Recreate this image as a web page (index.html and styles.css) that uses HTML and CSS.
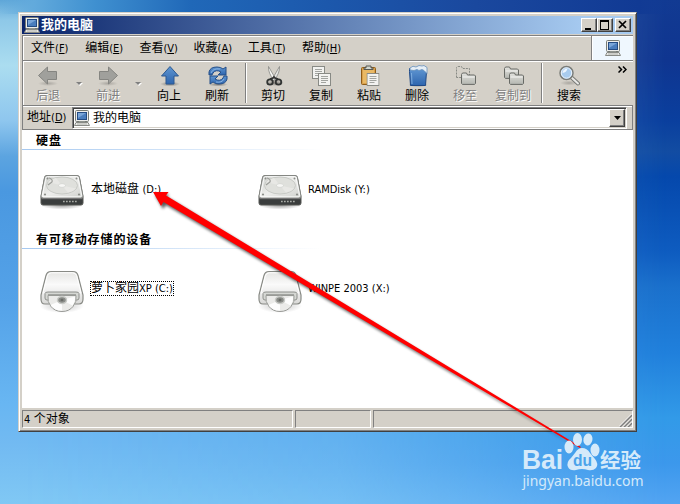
FILE: index.html
```html
<!DOCTYPE html>
<html lang="zh-CN">
<head>
  <meta charset="UTF-8">
  <title>我的电脑</title>
  <link rel="stylesheet" href="styles.css">
</head>
<body>
  <!-- shared icons -->
  <svg class="defs" width="0" height="0">
    <defs>
      <linearGradient id="metal" x1="0" y1="0" x2="1" y2="1">
        <stop offset="0" stop-color="#c9ccc8"/><stop offset=".5" stop-color="#eeeeec"/><stop offset="1" stop-color="#cfd1cd"/>
      </linearGradient>
      <linearGradient id="shell" x1="0" y1="0" x2="0" y2="1">
        <stop offset="0" stop-color="#e4e4e2"/><stop offset=".4" stop-color="#fafafa"/><stop offset="1" stop-color="#d8d8d6"/>
      </linearGradient>
      <linearGradient id="blue" x1="0" y1="0" x2="0" y2="1">
        <stop offset="0" stop-color="#5f96d2"/><stop offset="1" stop-color="#2e65ae"/>
      </linearGradient>
      <linearGradient id="grayFolder" x1="0" y1="0" x2="0" y2="1">
        <stop offset="0" stop-color="#e2e2de"/><stop offset="1" stop-color="#b4b6b0"/>
      </linearGradient>
      <radialGradient id="shade">
        <stop offset="0" stop-color="#000" stop-opacity=".4"/><stop offset="1" stop-color="#000" stop-opacity="0"/>
      </radialGradient>
      <filter id="soft" x="-10%" y="-10%" width="120%" height="120%"><feGaussianBlur stdDeviation="1.7"/></filter>
    </defs>
    <symbol id="computer" viewBox="0 0 16 16">
      <rect x="1.5" y=".5" width="13" height="11" rx="1" fill="#eeeeec" stroke="#777b75"/>
      <rect x="3.5" y="2.5" width="9" height="7" fill="#4a7dbd" stroke="#244b83"/>
      <path d="M4 3h8L4 8z" fill="#79a5d8"/>
      <path d="M5 11.5h6v1.5H5z" fill="#a9aca6"/>
      <path d="M2 12.5h12l1.5 3H.5z" fill="#e8e8e4" stroke="#888a85"/>
      <path d="M3 14h10" stroke="#b0b2ad"/>
    </symbol>
    <symbol id="hdd" viewBox="0 0 44 36">
      <ellipse cx="22" cy="31" rx="22" ry="4.5" fill="url(#shade)"/>
      <path d="M7 1.5h30q2 0 2.400 2L43 23v6q0 2-2 2H3q-2 0-2-2v-6L4.600 3.500Q5 1.500 7 1.500z" fill="#3a3d3d" stroke="#555753"/>
      <path d="M7 1.500h30q2 0 2.400 2L43 22q.3 2-2 2H3q-2.300 0-2-2L4.600 3.500Q5 1.500 7 1.500z" fill="url(#metal)" stroke="#858783"/>
      <path d="M7.500 2.700h29q1.300 0 1.600 1.300l3.500 17.500q0 1.300-1.400 1.300H3.800q-1.400 0-1.400-1.300L6 4q.2-1.300 1.500-1.300z" fill="none" stroke="#fff" stroke-width=".8"/>
      <ellipse cx="22" cy="11.500" rx="15.500" ry="8.500" fill="#dfe0dc" stroke="#c4c6c2" stroke-width=".9"/>
      <path d="M22 11.500L8 8a15 8 0 0 1 8-4zM22 11.500l14 3a15 8 0 0 1-8 4z" fill="#e8e8e5"/>
      <ellipse cx="22" cy="11.500" rx="3.500" ry="1.900" fill="#f7f7f5" stroke="#c9cbc7" stroke-width=".6"/>
      <path d="M9 4q4 1 3 4l-4 3" fill="none" stroke="#9a9c98" stroke-width="1.200"/>
      <g fill="#8c8e8a"><circle cx="7.500" cy="4.500" r="1"/><circle cx="36.500" cy="4.500" r="1"/><circle cx="5" cy="20.500" r="1.100"/><circle cx="39" cy="20.500" r="1.100"/></g>
      <rect x="1.500" y="24" width="41" height="1.200" fill="#777"/>
      <path d="M23 27.500h15" stroke="#a9aca6" stroke-width="1.600" stroke-dasharray="1.700 1.300"/>
    </symbol>
    <symbol id="optical" viewBox="0 0 44 44">
      <ellipse cx="22" cy="36" rx="22" ry="7" fill="url(#shade)" opacity=".6"/>
      <path d="M11 1.500h22q4 0 5 4l5 19.500v4q0 5-4 5h-34q-4 0-4-5v-4L6 5.500q1-4 5-4z" fill="url(#shell)" stroke="#888a85" stroke-width="1.200"/>
      <path d="M11.300 2.800h21.400q3 0 4 3L41 23H3L7.300 6q1-3.200 4-3.200z" fill="none" stroke="#fff"/>
      <path d="M5 23.500q0-1.500 3-1.500h28q3 0 3 1.500V28q0 2-2 2H7q-2 0-2-2z" fill="#d5d7d3" stroke="#8e908c"/>
      <path d="M8 24h28v3H8z" fill="#a2a4a0"/>
      <path d="M8 25.500h28q1 6.500-3 11-4 5-11 5t-11-5q-4-4.500-3-11z" fill="#ebebe9" stroke="#999b97"/>
      <path d="M22 30L10.500 35q4.500 6 11.500 5.500zM22 30l13-3.500q.5 5-2.500 9z" fill="#fdfdfd"/>
      <ellipse cx="22" cy="30" rx="4.500" ry="3.500" fill="#8a8c88" stroke="#c9cbc7" stroke-width="1.500"/>
      <ellipse cx="22" cy="30" rx="1.500" ry="1.200" fill="#6a6c68"/>
    </symbol>
    <symbol id="arrow-left" viewBox="0 0 22 22">
      <ellipse cx="11" cy="18.500" rx="10" ry="2.500" fill="url(#shade)" opacity=".5"/>
      <path d="M1.500 10.500l9-8.500v4.500h9v8h-9V19z" fill="#a0a09c" stroke="#858581"/>
    </symbol>
    <symbol id="folder" viewBox="0 0 15 13">
      <path d="M.5 11.500v-9l1-1.500h4l1 2h7l1 1v7.500l-1 .9h-12z" fill="url(#grayFolder)" stroke="#686a66"/>
      <path d="M1.600 5h12" stroke="#f4f4f2"/>
    </symbol>
    <symbol id="page" viewBox="0 0 13 13">
      <rect x=".5" y=".5" width="12" height="12" fill="#f2f2f0" stroke="#888a85"/>
      <path d="M3 3.500h7M3 5.500h7M3 7.500h7M3 9.500h5" stroke="#a2a4a0"/>
    </symbol>
  </svg>

  <div class="window">
    <div class="titlebar">
      <svg class="icon16"><use href="#computer"/></svg>
      <span class="title">我的电脑</span>
      <div class="controls">
        <button><svg width="14" height="12"><path d="M3 9h6v2H3z"/></svg></button>
        <button><svg width="14" height="12"><path d="M2 1h9v10H2zM3 3v7h7V3z" fill-rule="evenodd"/></svg></button>
        <button class="close"><svg width="14" height="12"><path d="M3 2l7 7M10 2l-7 7" stroke="#000" stroke-width="1.700"/></svg></button>
      </div>
    </div>

    <div class="menubar">
      <span class="menu">文件<span class="key">(<u>F</u>)</span></span>
      <span class="menu">编辑<span class="key">(<u>E</u>)</span></span>
      <span class="menu">查看<span class="key">(<u>V</u>)</span></span>
      <span class="menu">收藏<span class="key">(<u>A</u>)</span></span>
      <span class="menu">工具<span class="key">(<u>T</u>)</span></span>
      <span class="menu">帮助<span class="key">(<u>H</u>)</span></span>
      <div class="throbber"><svg class="icon16"><use href="#computer"/></svg></div>
    </div>

    <div class="toolbar">
      <div class="tool back disabled"><svg><use href="#arrow-left"/></svg><span>后退</span></div>
      <div class="drop"></div>
      <div class="tool forward disabled"><svg class="flip"><use href="#arrow-left"/></svg><span>前进</span></div>
      <div class="drop"></div>
      <div class="tool">
        <svg viewBox="0 0 22 22"><ellipse cx="12" cy="19" rx="10" ry="2.500" fill="url(#shade)"/><path d="M12 1.500l8.500 9.500H16v8H8v-8H3.500z" fill="url(#blue)" stroke="#2c5990"/></svg>
        <span>向上</span>
      </div>
      <div class="tool">
        <svg viewBox="0 0 22 22">
          <ellipse cx="12" cy="19.500" rx="10" ry="2" fill="url(#shade)"/>
          <path d="M3 10V7q1-5 8-5 4 0 6 2l3-2v8h-8l3-3q-5-3-8 1l-1 2z" fill="url(#blue)" stroke="#254f88"/>
          <path d="M21 11v3q-1 5-8 5-4 0-6-2l-3 2v-8h8l-3 3q5 3 8-1l1-2z" fill="url(#blue)" stroke="#254f88"/>
          <path d="M5 8q2-5 9-4M18 14q-2 4-8 3" fill="none" stroke="#8eb7e4"/>
        </svg>
        <span>刷新</span>
      </div>
      <div class="sep"></div>
      <div class="tool">
        <svg viewBox="0 0 22 22">
          <ellipse cx="13" cy="18" rx="9" ry="3" fill="url(#shade)"/>
          <path d="M6.500 1.500l7.500 13-2 1Q6 8 6.500 1.500z" fill="#f6f6f4" stroke="#858783" stroke-width=".8"/>
          <path d="M17.500 1.500L10 14.500l2 1q6-7.500 5.500-14z" fill="#e5e5e3" stroke="#858783" stroke-width=".8"/>
          <path d="M8 14l3-1 1-1 1 1 3 1" fill="none" stroke="#333" stroke-width="1.800"/>
          <ellipse cx="8" cy="17" rx="2.800" ry="2.600" fill="none" stroke="#303332" stroke-width="1.800"/>
          <ellipse cx="16.500" cy="17" rx="2.800" ry="2.600" fill="none" stroke="#303332" stroke-width="1.800"/>
        </svg>
        <span>剪切</span>
      </div>
      <div class="tool">
        <svg viewBox="0 0 22 22"><use href="#page" x="2" y="1" width="13" height="13"/><use href="#page" x="8" y="8" width="13" height="13"/></svg>
        <span>复制</span>
      </div>
      <div class="tool">
        <svg viewBox="0 0 22 22">
          <rect x="3.500" y="2.500" width="14" height="17" rx="1" fill="#d9a04c" stroke="#8f5d18"/>
          <path d="M5 5h11v13H5z" fill="#e9b965"/>
          <path d="M6 4.500h9V3h-2V1H8v2H6z" fill="#d3d7cf" stroke="#555753"/>
          <use href="#page" x="8.500" y="8" width="13" height="13"/>
        </svg>
        <span>粘贴</span>
      </div>
      <div class="tool">
        <svg viewBox="0 0 22 22">
          <ellipse cx="12" cy="20" rx="10" ry="2" fill="url(#shade)"/>
          <path d="M3.500 3.500h17v3l-1 14h-15l-1-14z" fill="url(#blue)" stroke="#204a87"/>
          <path d="M4 3q3-3 6-1l3-1.500 3 .500 2-.500 3 2v6l-3-3-2-1-3 1-2-1-3 1-4-.500z" fill="#e6eef5" stroke="#668fbd" stroke-width=".8"/>
          <path d="M5.500 8l.5 11" stroke="#7faee0"/>
        </svg>
        <span>删除</span>
      </div>
      <div class="tool disabled">
        <svg viewBox="0 0 22 22"><path d="M2.500 12.500v-10l1-1h4l1 2h7v9z" fill="none" stroke="#888a85" stroke-dasharray="2 1"/><use href="#folder" x="7" y="7" width="15" height="13"/></svg>
        <span>移至</span>
      </div>
      <div class="tool disabled">
        <svg viewBox="0 0 22 22"><use href="#folder" x="2" y="1" width="15" height="13"/><use href="#folder" x="7" y="7" width="15" height="13"/></svg>
        <span>复制到</span>
      </div>
      <div class="sep"></div>
      <div class="tool">
        <svg viewBox="0 0 22 22">
          <ellipse cx="11" cy="18" rx="9" ry="2.500" fill="url(#shade)" opacity=".5"/>
          <path d="M13.500 12.500l6.500 6" stroke="#777975" stroke-width="4" stroke-linecap="round"/>
          <path d="M13.500 12.500l6.500 6" stroke="#e8e8e6" stroke-width="2" stroke-linecap="round"/>
          <circle cx="8.500" cy="8" r="6.500" fill="#a9ccee" stroke="#7b7d79" stroke-width="1.500"/>
          <circle cx="8.500" cy="8" r="5.200" fill="none" stroke="#e9f2fb"/>
          <path d="M4.500 8q0-4 5-4.500-1 4-5 4.500z" fill="#edf6ff"/>
        </svg>
        <span>搜索</span>
      </div>
      <svg class="more" width="9" height="7"><path d="M.5 .5l3 3-3 3M5 .5l3 3-3 3" fill="none" stroke="#000" stroke-width="1.500"/></svg>
    </div>

    <div class="addressbar">
      <span class="address-label">地址<span class="key">(<u>D</u>)</span></span>
      <div class="combo">
        <svg class="icon16"><use href="#computer"/></svg>
        <span>我的电脑</span>
        <button><svg width="7" height="4"><path d="M0 0h7L3.500 4z"/></svg></button>
      </div>
    </div>

    <div class="content">
      <h2>硬盘</h2>
      <div class="items">
        <div class="item"><svg class="hdd"><use href="#hdd"/></svg><div class="name">本地磁盘 <span class="latin">(D:)</span></div></div>
        <div class="item"><svg class="hdd"><use href="#hdd"/></svg><div class="name latin">RAMDisk (Y:)</div></div>
      </div>
      <h2>有可移动存储的设备</h2>
      <div class="items">
        <div class="item"><svg class="optical"><use href="#optical"/></svg><div class="name focused">萝卜家园<span class="latin">XP (C:)</span></div></div>
        <div class="item"><svg class="optical"><use href="#optical"/></svg><div class="name latin">WINPE 2003 (X:)</div></div>
      </div>
    </div>

    <div class="statusbar">
      <div class="panel count"><span class="latin">4</span> 个对象</div>
      <div class="panel small"></div>
      <div class="panel last">
        <svg width="13" height="13"><path d="M1 13L13 1M5 13l8-8M9 13l4-4" stroke="#808080" stroke-width="1.600"/><path d="M0 12.500L12.500 0M4 12.500L13 3.500M8 12.500l5-5" stroke="#fff" stroke-width=".8"/></svg>
      </div>
    </div>
  </div>

  <svg class="pointer" width="680" height="504">
    <path d="M155 195l14-1-2 3L582 450 166 205l-3 4z" fill="#000" opacity=".65" filter="url(#soft)"/>
    <path d="M153 192l15.500 0-2.500 3.500L581 447l-1 1L163.500 202l-2.500 4z" fill="#f00"/>
  </svg>

  <svg class="watermark" width="130" height="66" fill="#d5eafa">
    <text class="brand" x="1" y="37" textLength="41" lengthAdjust="spacingAndGlyphs">Bai</text>
    <g>
      <ellipse cx="48" cy="15" rx="4.500" ry="6.500"/>
      <ellipse cx="56.500" cy="7.500" rx="4.500" ry="6.500"/>
      <ellipse cx="67" cy="7.500" rx="4.500" ry="6" transform="rotate(10 67 7)"/>
      <ellipse cx="74" cy="18" rx="4.500" ry="6.500"/>
      <path d="M61 16q5 0 8 5l5 6q4 5 1 9-3 3-8 2-6-2-12 0-6 1-8-3-2-5 3-9l4-5q3-5 7-5z"/>
    </g>
    <text class="du" x="52" y="34" textLength="19" lengthAdjust="spacingAndGlyphs">du</text>
    <text class="cn" x="79" y="35.500">经验</text>
    <text class="url" x="1.500" y="54" textLength="121" lengthAdjust="spacingAndGlyphs">jingyan.baidu.com</text>
  </svg>
</body>
</html>
```
FILE: styles.css
```css
* {
  box-sizing: border-box;
}

body {
  margin: 0;
  width: 680px;
  height: 504px;
  overflow: hidden;
  position: relative;
  isolation: isolate;
  display: flow-root;
  font-family: "DejaVu Sans Condensed", "Noto Sans CJK SC", sans-serif;
  font-size: 12px;
  line-height: 14px;
  color: #000;
  background: linear-gradient(180deg, #123a92, #0f3590 12%, #0a3f9e 24%, #124ca2 30%, #0548ac 35%, #0e5cc0 50%, #1a70cc 57%, #2080dc 70%, #329ae8 83%, #3c98ec 92%, #52a4f2);
}

/* light left side of the wallpaper */
body::before {
  content: "";
  position: absolute;
  inset: 0;
  z-index: -1;
  background: linear-gradient(180deg, #5ea6d8, #8ec8e8 4%, #abddf0 13%, #8ec6ee 24%, #5ca4e0 31%, #4a98e0 38%, #54a2e8 60%, #68b6f2 80%, #72baf2 88%, #80c8f4);
  mask-image: linear-gradient(90deg, #000 20px, rgba(0, 0, 0, 0.75) 50%, transparent 98%);
}

/* sky above the window */
body::after {
  content: "";
  position: absolute;
  inset: 0 0 auto;
  height: 14px;
  z-index: -1;
  background: linear-gradient(90deg, transparent, #62aadc 5%, #3f90d0 14%, #2068b8 28%, #1c58ac 48%, #1a489e 70%, #113a94 94%, transparent);
}

.defs {
  position: absolute;
}

u {
  text-decoration: underline;
  text-underline-offset: 1px;
}

button {
  padding: 0;
  display: flex;
  align-items: center;
  justify-content: center;
  background: #d4d0c8;
  border: 1px solid;
  border-color: #fff #404040 #404040 #fff;
  box-shadow: inset -1px -1px #808080;
}

.icon16 {
  width: 16px;
  height: 16px;
  flex: none;
}

.latin, .key {
  font-size: 11px;
}

.window {
  width: 619px;
  height: 420px;
  margin: 12px 0 0 18px;
  display: flex;
  flex-direction: column;
  background: #d4d0c8;
  border: 1px solid;
  border-color: #d4d0c8 #404040 #404040 #d4d0c8;
  box-shadow: inset 1px 1px #fff, inset -1px -1px #808080;
  padding: 3px;
}

/* title bar */
.titlebar {
  height: 18px;
  flex: none;
  display: flex;
  align-items: center;
  padding: 0 2px;
  background: linear-gradient(90deg, #0a246a, #a6caf0 92%);
}

.title {
  margin-left: 1px;
  color: #fff;
  font-weight: bold;
  font-size: 13px;
}

.controls {
  display: flex;
  margin-left: auto;
}

.controls button {
  width: 16px;
  height: 14px;
}

.controls .close {
  margin-left: 2px;
}

/* menu */
.menubar {
  height: 26px;
  flex: none;
  display: flex;
  align-items: center;
  padding-left: 8px;
  margin-top: 1px;
  border: 1px solid #808080;
  border-right: 0;
  box-shadow: inset 1px 1px #fff;
}

.menu {
  width: 54.2px;
  white-space: nowrap;
}

.throbber {
  width: 42px;
  height: 24px;
  margin-left: auto;
  display: flex;
  align-items: center;
  justify-content: center;
  background: #eff7fe;
  border-left: 1px solid #808080;
  box-shadow: inset 1px 1px #fff;
}

/* toolbar */
.toolbar {
  height: 45px;
  flex: none;
  display: flex;
  padding-left: 2px;
  border-left: 1px solid #808080;
  border-bottom: 1px solid #808080;
  box-shadow: inset 1px 1px #fff;
}

.tool {
  width: 48px;
  padding-top: 4px;
  display: flex;
  flex-direction: column;
  align-items: center;
  white-space: nowrap;
}

.tool svg {
  width: 22px;
  height: 22px;
}

.tool span {
  margin-top: 2px;
}

.flip {
  transform: scaleX(-1);
}

.back {
  width: 46px;
}

.forward {
  width: 44px;
}

.disabled {
  color: #808080;
  text-shadow: 1px 1px #fff;
}

.drop {
  width: 15px;
  display: flex;
  justify-content: center;
  padding-top: 21px;
}

.drop::before {
  content: "";
  height: 0;
  border: 3px solid transparent;
  border-top-color: #808080;
  border-bottom: 0;
  filter: drop-shadow(1px 1px #fff);
}

.sep {
  width: 2px;
  height: 40px;
  margin: 2px 2px 0 4px;
  border-left: 1px solid #808080;
  border-right: 1px solid #fff;
}

.more {
  margin: 5px 6px 0 auto;
}

/* address */
.addressbar {
  height: 24px;
  flex: none;
  display: flex;
  align-items: center;
  padding-left: 4px;
  border: 1px solid #808080;
  border-width: 0 1px 1px;
  box-shadow: inset 0 1px #fff;
}

.address-label {
  width: 45px;
}

.combo {
  width: 555px;
  height: 22px;
  display: flex;
  align-items: center;
  background: #fff;
  border: 1px solid;
  border-color: #808080 #fff #fff #808080;
  box-shadow: inset 1px 1px #404040, inset -1px -1px #d4d0c8;
  padding: 1px 1px 1px 1px;
}

.combo span {
  margin-left: 3px;
}

.combo button {
  width: 16px;
  height: 18px;
  margin-left: auto;
}

/* drives */
.content {
  flex: 1;
  background: #fff;
}

h2 {
  height: 20px;
  margin: 0;
  padding: 4px 0 0 14px;
  font-size: 12px;
  line-height: 14px;
  letter-spacing: 0.9px;
  background: linear-gradient(90deg, #a5c8f0, #fff 300px) bottom / 100% 1px no-repeat;
}

.items {
  height: 79px;
  display: grid;
  grid-template-columns: 218px 218px;
  padding-left: 18px;
}

.item {
  display: flex;
  align-items: center;
  white-space: nowrap;
}

.name {
  margin-left: 7px;
}

.name.latin {
  margin-left: 6px;
}

.hdd {
  width: 44px;
  height: 36px;
  margin-top: 4px;
}

.optical {
  width: 44px;
  height: 44px;
  margin-top: 6px;
}

.focused {
  outline: 1px dotted #000;
  line-height: 13px;
}

/* status */
.statusbar {
  height: 20px;
  flex: none;
  display: flex;
  gap: 2px;
  padding-top: 2px;
}

.panel {
  border: 1px solid;
  border-color: #808080 #fff #fff #808080;
}

.count {
  width: 271px;
  padding: 1px 0 0 1px;
}

.small {
  width: 76px;
}

.last {
  flex: 1;
  display: flex;
  align-items: flex-end;
  justify-content: flex-end;
}

/* red arrow and watermark lie over the desktop */
.pointer {
  position: absolute;
  left: 0;
  top: 0;
}

.watermark {
  position: absolute;
  left: 521px;
  top: 432px;
}

.brand {
  font: bold 27px "Liberation Sans", sans-serif;
}

.du {
  font: bold 17px "Liberation Sans", sans-serif;
  fill: #4ba3ea;
}

.cn {
  font: bold 20.5px "Noto Sans CJK SC", sans-serif;
}

.url {
  font: 14px "Noto Sans", sans-serif;
}
```
